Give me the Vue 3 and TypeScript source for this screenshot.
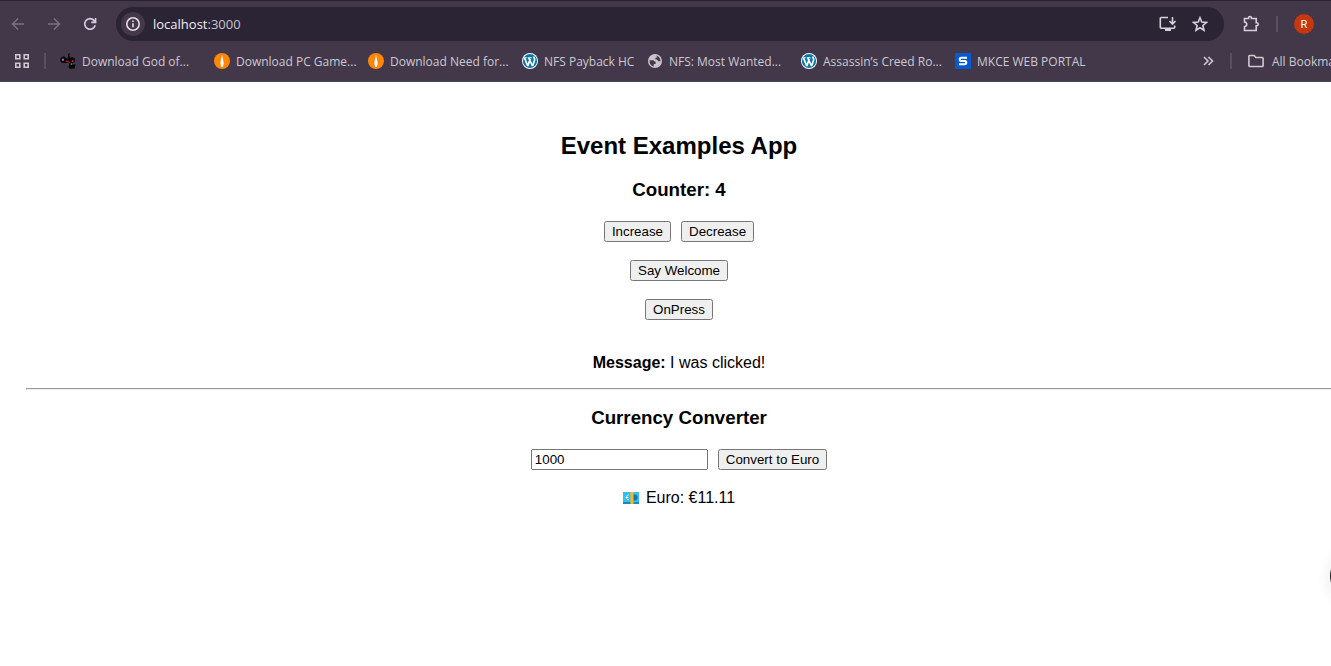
<script setup lang="ts">
import { computed, ref } from 'vue'

type IconName = 'gamepad' | 'flame' | 'wordpress' | 'globe' | 'portal'

interface Bookmark {
  label: string
  icon: IconName
}

const bookmarks: Bookmark[] = [
  { label: 'Download God of...', icon: 'gamepad' },
  { label: 'Download PC Game...', icon: 'flame' },
  { label: 'Download Need for...', icon: 'flame' },
  { label: 'NFS Payback HC', icon: 'wordpress' },
  { label: 'NFS: Most Wanted...', icon: 'globe' },
  { label: 'Assassin’s Creed Ro...', icon: 'wordpress' },
  { label: 'MKCE WEB PORTAL', icon: 'portal' },
]

const RUPEES_PER_EURO = 90

const counter = ref(4)
const message = ref('I was clicked!')
const amount = ref('1000')
const converted = ref(1000)
const euro = computed(() => (converted.value / RUPEES_PER_EURO).toFixed(2))

function convert(): void {
  converted.value = Number(amount.value) || 0
}
</script>

<template>
  <div class="window">
    <header class="chrome">
      <div class="toolbar">
        <button class="icon-button dim" type="button" aria-label="Back">
          <svg width="16" height="16" viewBox="0 0 16 16"><path d="M14 8H3M8 2.5 2.5 8 8 13.5" /></svg>
        </button>
        <button class="icon-button dim" type="button" aria-label="Forward">
          <svg width="16" height="16" viewBox="0 0 16 16"><path d="M2 8h11M8 2.5 13.5 8 8 13.5" /></svg>
        </button>
        <button class="icon-button" type="button" aria-label="Reload">
          <svg width="16" height="16" viewBox="0 0 16 16"><path d="M13.2 9.2A5.3 5.3 0 1 1 12 4.4l1.4 1.5M13.6 2v4.4H9.3" /></svg>
        </button>
        <div class="omnibox">
          <button class="site-info" type="button" aria-label="Site information">
            <svg width="16" height="16" viewBox="0 0 16 16"><circle cx="8" cy="8" r="6.2" /><path d="M8 7.3v4M8 4.4v1.5" /></svg>
          </button>
          <span class="address">localhost<span class="port">:3000</span></span>
          <button class="omni-button" type="button" aria-label="Install app">
            <svg width="18" height="16" viewBox="0 0 18 16"><path d="M9 1.5H2.2a.9.9 0 0 0-.9.9v8.9c0 .5.4.9.9.9h12.6a.9.9 0 0 0 .9-.9V9.5M13.5 1v6.5M10.5 5l3 3 3-3" /><path class="solid" d="M6 12h6v3H6z" /></svg>
          </button>
          <button class="omni-button" type="button" aria-label="Bookmark this tab">
            <svg width="16" height="16" viewBox="0 0 16 16"><path d="m8 1.7 1.8 4.3 4.7.4-3.6 3.1 1.1 4.7L8 11.7l-4 2.5 1.1-4.7L1.5 6.4 6.2 6z" /></svg>
          </button>
        </div>
        <button class="icon-button extensions" type="button" aria-label="Extensions">
          <svg width="18" height="18" viewBox="0 0 18 18"><path d="M2.5 3.5h4V3a1.500 1.500 0 0 1 3 0v.5h4.700v4.300h.5a1.500 1.500 0 0 1 0 3h-.5v4.700H2.500v-3.800c3-.5 3-4.300 0-4.700z" /></svg>
        </button>
        <span class="divider"></span>
        <button class="avatar" type="button" aria-label="Profile">R</button>
      </div>

      <nav class="bookmarks" aria-label="Bookmarks">
        <button class="apps" type="button" aria-label="Apps">
          <svg width="16" height="16" viewBox="0 0 16 16"><path d="M1.800 1.800h4v4h-4zM10.200 1.800h4v4h-4zM1.800 10.200h4v4h-4zM10.200 10.200h4v4h-4z" /></svg>
        </button>
        <span class="divider"></span>
        <div class="links">
          <a v-for="item in bookmarks" :key="item.label" href="#" :class="{ long: item.label.endsWith('...') }">
            <svg v-if="item.icon === 'gamepad'" class="favicon" viewBox="0 0 16 16">
              <path fill="none" stroke="#000" stroke-width="1.400" d="M9 6V3.500C9 2.300 7.500 2.500 9.500 .5" />
              <path fill="#050505" d="M1 4.500 4 3.300l2.500 2.200 3-.2L12 4l3 1.500-.5 3.500 1 2.500-1 4-5 .3-1-2.800 1-2.500-2-.7-3 .2L1 9.500 0 7z" />
              <circle cx="3" cy="6.800" r="1.300" fill="#77757c" />
              <path fill="none" stroke="#d51b27" stroke-width="1.200" d="m6 8 4 1.500" />
              <circle cx="12.500" cy="8" r="1" fill="#d82030" /><circle cx="14" cy="10.500" r="1" fill="#3b45e0" /><circle cx="11.500" cy="11" r="1" fill="#28963a" />
            </svg>
            <svg v-else-if="item.icon === 'flame'" class="favicon" viewBox="0 0 16 16">
              <circle cx="8" cy="8" r="8" fill="#ff8708" /><path fill="#fff" d="M8 1.800 9.700 10 9 13.800H7L6.300 10z" />
            </svg>
            <svg v-else-if="item.icon === 'wordpress'" class="favicon" viewBox="0 0 16 16">
              <circle cx="8" cy="8" r="8" fill="#fff" /><circle cx="8" cy="8" r="7.100" fill="#0877a8" />
              <path fill="none" stroke="#fff" stroke-width="1.700" stroke-linejoin="bevel" d="M2.500 5 5.800 13 8.200 6M6.800 5 10.500 13l2-5.500c.7-2-.8-2.500-.6-4" />
              <path fill="none" stroke="#fff" stroke-width="1" d="M1.500 4.800h3.200M5.700 4.800h4" />
            </svg>
            <svg v-else-if="item.icon === 'globe'" class="favicon" viewBox="0 0 16 16">
              <circle cx="8" cy="8" r="7" fill="#c8c4cb" />
              <path fill="#42384a" d="M2.600 7.200h3.200c1.400 0 1.400 1.600 2.800 1.600v2.100H6.700v2.700C4 13 2.300 10.200 2.600 7.200zM8.800 2.500c2.700.3 4.700 2.700 4.600 5.700h-2.200c-.2-1.400-1-1.900-2.800-1.800V4.700h1.400V3z" />
            </svg>
            <svg v-else class="favicon" viewBox="0 0 16 16">
              <path fill="#0759cf" d="M0 0h16v16H0z" /><path fill="none" stroke="#fff" stroke-width="2" d="M12 4.700H6.200c-2 0-2 3.200 0 3.200h3.600c2 0 2 3.400 0 3.400H4" />
            </svg>
            <span>{{ item.label }}</span>
          </a>
        </div>
        <div class="tail">
          <button class="more" type="button" aria-label="More bookmarks">
            <svg width="12" height="12" viewBox="0 0 12 12"><path d="m2 2 4 4-4 4M6.500 2l4 4-4 4" /></svg>
          </button>
          <span class="divider"></span>
          <a href="#">
            <svg class="favicon folder" viewBox="0 0 16 16"><path d="M1.700 2.500h4.500l1.700 2h6.400c.5 0 .8.300.8.800v7.400c0 .5-.3.800-.8.800H1.700c-.5 0-.8-.3-.8-.8V3.300c0-.5.300-.8.800-.8z" /></svg>
            <span>All Bookmarks</span>
          </a>
        </div>
      </nav>
    </header>

    <main>
      <h2>Event Examples App</h2>
      <h3>Counter: {{ counter }}</h3>
      <div class="row">
        <button type="button" @click="counter++">Increase</button>
        <button type="button" @click="counter--">Decrease</button>
      </div>
      <div class="row">
        <button type="button" @click="message = 'Welcome!'">Say Welcome</button>
      </div>
      <div class="row">
        <button type="button" @click="message = 'I was clicked!'">OnPress</button>
      </div>
      <p class="message"><strong>Message:</strong> {{ message }}</p>
      <hr />
      <h3 id="converter">Currency Converter</h3>
      <form class="row" @submit.prevent="convert">
        <input v-model="amount" type="text" aria-labelledby="converter" />
        <button type="submit">Convert to Euro</button>
      </form>
      <p class="result">
        <svg class="note" width="16" height="12" viewBox="0 0 16 12" aria-hidden="true">
          <path fill="#1689c7" d="M0 1h16v11H0z" /><path fill="#35bdf0" d="M0 0h16v10H0z" />
          <circle cx="11.500" cy="5.500" r="3" fill="#1577a8" />
          <path fill="none" stroke="#d9f5ff" d="M6 3C3 2.300 3 8.500 6 7.800M2.500 5.500h3" />
          <path fill="#ffb51c" d="M7.500 0h3v12h-3z" />
        </svg>
        <span>Euro: €{{ euro }}</span>
      </p>
    </main>
    <button class="assistant" type="button" aria-label="Open assistant"></button>
  </div>
</template>

<style>
body {
  margin: 0;
  background: #fff;
}
</style>

<style scoped>
.window {
  position: relative;
  min-height: 100vh;
  overflow: hidden;
  font-family: "Liberation Sans", Arial, sans-serif;
  color: #000;
}

.chrome {
  box-sizing: border-box;
  background: #42384a;
  border-top: 1px solid #2a2033;
  border-bottom: 1px solid #4e4654;
  color: #cdc8d1;
  font-family: "Segoe UI", "Open Sans", "Noto Sans", sans-serif;
  font-size: 12px;
}

.chrome button {
  display: flex;
  align-items: center;
  justify-content: center;
  flex: none;
  padding: 0;
  border: 0;
  background: none;
  color: inherit;
}

.chrome button svg,
.folder {
  fill: none;
  stroke: currentColor;
  stroke-width: 1.6;
}

.chrome .solid {
  fill: currentColor;
  stroke: none;
}

.toolbar {
  display: flex;
  align-items: center;
  height: 46px;
}

.chrome .icon-button {
  width: 36px;
  height: 34px;
  color: #d8cde0;
}

.chrome .dim {
  color: #796f80;
}

.omnibox {
  display: flex;
  align-items: center;
  flex: 1;
  height: 34px;
  margin-left: 8px;
  padding: 0 12px 0 5px;
  border-radius: 17px;
  background: #2b2435;
}

.chrome .site-info {
  width: 24px;
  height: 24px;
  border-radius: 50%;
  background: #42384a;
  color: #e4dee8;
}

.address {
  flex: 1;
  margin-left: 8px;
  color: #f0edf2;
  font-size: 13px;
}

.port {
  color: #c9c3ce;
}

.chrome .omni-button {
  width: 24px;
  height: 24px;
  margin-left: 8px;
  color: #d5d0d9;
}

.chrome .extensions {
  margin: 0 7px 0 9px;
}

.divider {
  flex: none;
  width: 2px;
  height: 16px;
  background: #594e62;
}

.chrome .avatar {
  width: 20px;
  height: 20px;
  margin: 0 17px 0 16px;
  border-radius: 50%;
  background: #c43710;
  color: #fff;
  font-family: Roboto, sans-serif;
  font-size: 11px;
}

.bookmarks {
  display: flex;
  align-items: center;
  height: 28px;
  padding-bottom: 6px;
}

.apps {
  width: 44px;
  height: 24px;
}

.links {
  display: flex;
  flex: 1;
  min-width: 0;
  margin-left: 14px;
  overflow: hidden;
}

.bookmarks a {
  display: flex;
  align-items: center;
  flex: none;
  gap: 6px;
  color: inherit;
  text-decoration: none;
  white-space: nowrap;
}

.links a {
  width: 125px;
}

.links a.long {
  width: 154px;
}

.favicon {
  flex: none;
  width: 16px;
  height: 16px;
}

.tail {
  display: flex;
  align-items: center;
  flex: none;
  width: 135px;
  overflow: hidden;
}

.more {
  width: 24px;
  height: 24px;
}

.tail .divider {
  margin: 0 16px 0 10px;
}

.tail a {
  gap: 8px;
}

main {
  display: flex;
  flex-direction: column;
  align-items: center;
  margin-right: -1px;
  padding: 50px 0 60px 26px;
}

h2,
h3,
p {
  margin: 0;
}

h2 {
  line-height: 28px;
}

h3 {
  margin: 19px 0 20px;
  line-height: 22px;
}

hr {
  box-sizing: border-box;
  align-self: stretch;
  height: 2px;
  margin: 16px 0 0;
}

#converter {
  margin-top: 17px;
}

.row {
  display: flex;
  gap: 10px;
}

.row + .row {
  margin-top: 18px;
}

main button,
input {
  font-family: inherit;
}

input {
  box-sizing: border-box;
  width: 177px;
}

.message {
  margin-top: 34px;
  line-height: 18px;
}

.result {
  display: flex;
  align-items: center;
  gap: 7px;
  margin-top: 19px;
  line-height: 18px;
}

.assistant {
  position: absolute;
  top: 552px;
  right: -47px;
  width: 48px;
  height: 48px;
  padding: 0;
  border: 0;
  border-radius: 50%;
  background: #222;
  box-shadow: 0 2px 16px rgba(0, 0, 0, 0.1);
}
</style>
